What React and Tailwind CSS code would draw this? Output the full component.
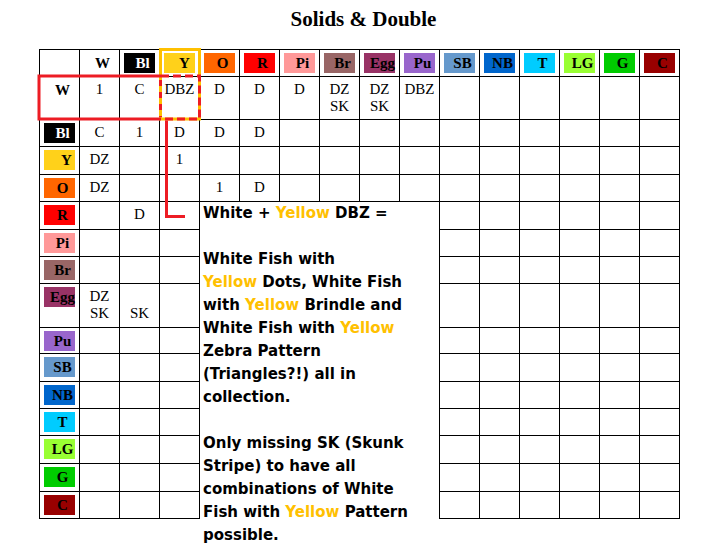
import React from "react";

const HEAD = [
  { t: "" },
  { t: "W" },
  { t: "Bl", c: "bg-black text-white" },
  { t: "Y", c: "bg-[#ffd11a] pl-[10px]" },
  { t: "O", c: "bg-[#ff6600]" },
  { t: "R", c: "bg-[#ff0000]" },
  { t: "Pi", c: "bg-[#ff9999]" },
  { t: "Br", c: "bg-[#996666]" },
  { t: "Egg", c: "bg-[#993366]" },
  { t: "Pu", c: "bg-[#9966cc]" },
  { t: "SB", c: "bg-[#6699cc]" },
  { t: "NB", c: "bg-[#0066cc]" },
  { t: "T", c: "bg-[#00ccff]" },
  { t: "LG", c: "bg-[#99ff33]" },
  { t: "G", c: "bg-[#00cc00]" },
  { t: "C", c: "bg-[#990000]" },
];

const ROWS = [
  { t: "W", c: "", d: ["1", "C", "DBZ", "D", "D", "D", "DZ\nSK", "DZ\nSK", "DBZ"] },
  { t: "Bl", c: "bg-black text-white", d: ["C", "1", "D", "D", "D"] },
  { t: "Y", c: "bg-[#ffd11a] pl-[14px]", d: ["DZ", "", "1"] },
  { t: "O", c: "bg-[#ff6600]", d: ["DZ", "", "", "1", "D"] },
  { t: "R", c: "bg-[#ff0000]", d: ["", "D"] },
  { t: "Pi", c: "bg-[#ff9999]", d: [] },
  { t: "Br", c: "bg-[#996666]", d: [] },
  { t: "Egg", c: "bg-[#993366]", d: ["DZ\nSK", "\nSK"] },
  { t: "Pu", c: "bg-[#9966cc]", d: [] },
  { t: "SB", c: "bg-[#6699cc]", d: [] },
  { t: "NB", c: "bg-[#0066cc]", d: [] },
  { t: "T", c: "bg-[#00ccff]", d: [] },
  { t: "LG", c: "bg-[#99ff33]", d: [] },
  { t: "G", c: "bg-[#00cc00]", d: [] },
  { t: "C", c: "bg-[#990000]", d: [] },
];

function Label({ t, c }) {
  if (!t) return <div className="border-r border-b border-black" />;
  return (
    <div className="border-r border-b border-black">
      <div className={`mx-[4px] mt-[3px] h-[20px] leading-[20px] font-bold text-center pl-[6px] ${c || ""}`}>{t}</div>
    </div>
  );
}

function Data({ v }) {
  const lines = v ? v.split("\n") : [];
  return (
    <div className="border-r border-b border-black pt-[4px] text-center">
      {lines.map((l, i) => (
        <div key={i} className="h-[17px]">{l}</div>
      ))}
    </div>
  );
}

const Y = ({ children }) => <span className="text-[#ffc000]">{children}</span>;

export default function App() {
  const cells = [];
  HEAD.forEach((h, i) => cells.push(<Label key={"h" + i} t={h.t} c={h.c} />));
  ROWS.forEach((r, ri) => {
    cells.push(<Label key={"l" + ri} t={r.t} c={r.c} />);
    for (let j = 0; j < 15; j++) {
      cells.push(<Data key={"d" + ri + "-" + j} v={r.d[j] || ""} />);
    }
  });

  return (
    <div className="relative w-[720px] h-[548px] overflow-hidden bg-white text-black">
      <div className="h-[49px] pt-[7px] pl-[7px] text-center font-['Liberation_Serif',serif] font-bold text-[21px] leading-[24px]">
        Solids &amp; Double
      </div>
      <div className="ml-[39px] w-fit grid grid-cols-[repeat(16,40px)] grid-rows-[27px_43px_27px_28px_27px_28px_27px_27px_44px_26px_28px_27px_27px_28px_28px_27px] border-l border-t border-black font-['Liberation_Serif',serif] text-[15px] leading-[17px]">
        {cells}
      </div>

      <svg className="absolute left-0 top-0 pointer-events-none" width="720" height="548" viewBox="0 0 720 548">
        <rect x="160.5" y="49.5" width="39" height="69.5" fill="none" stroke="#ffc000" strokeWidth="3" />
        <path d="M161 76 H39 V119 H161" fill="none" stroke="#ed1c24" strokeWidth="3" />
        <path d="M161 76 H199.5 V119 H161" fill="none" stroke="#ed1c24" strokeWidth="3" strokeDasharray="8 4" />
        <path d="M160.5 80 V117" fill="none" stroke="#ed1c24" strokeWidth="3" strokeDasharray="6 6" />
        <path d="M166.5 120.5 V216.5 H185" fill="none" stroke="#ed1c24" strokeWidth="3" />
      </svg>

      <div className="absolute left-[200px] top-[202px] w-[239px] h-[346px] bg-white pl-[3px] font-['DejaVu_Sans',sans-serif] font-bold text-[15px] leading-[23px] whitespace-nowrap">
        <div>White + <Y>Yellow</Y> DBZ =</div>
        <div className="h-[23px]" />
        <div>White Fish with</div>
        <div><Y>Yellow</Y> Dots, White Fish</div>
        <div>with <Y>Yellow</Y> Brindle and</div>
        <div>White Fish with <Y>Yellow</Y></div>
        <div>Zebra Pattern</div>
        <div>(Triangles?!) all in</div>
        <div>collection.</div>
        <div className="h-[23px]" />
        <div>Only missing SK (Skunk</div>
        <div>Stripe) to have all</div>
        <div>combinations of White</div>
        <div>Fish with <Y>Yellow</Y> Pattern</div>
        <div>possible.</div>
      </div>
    </div>
  );
}
